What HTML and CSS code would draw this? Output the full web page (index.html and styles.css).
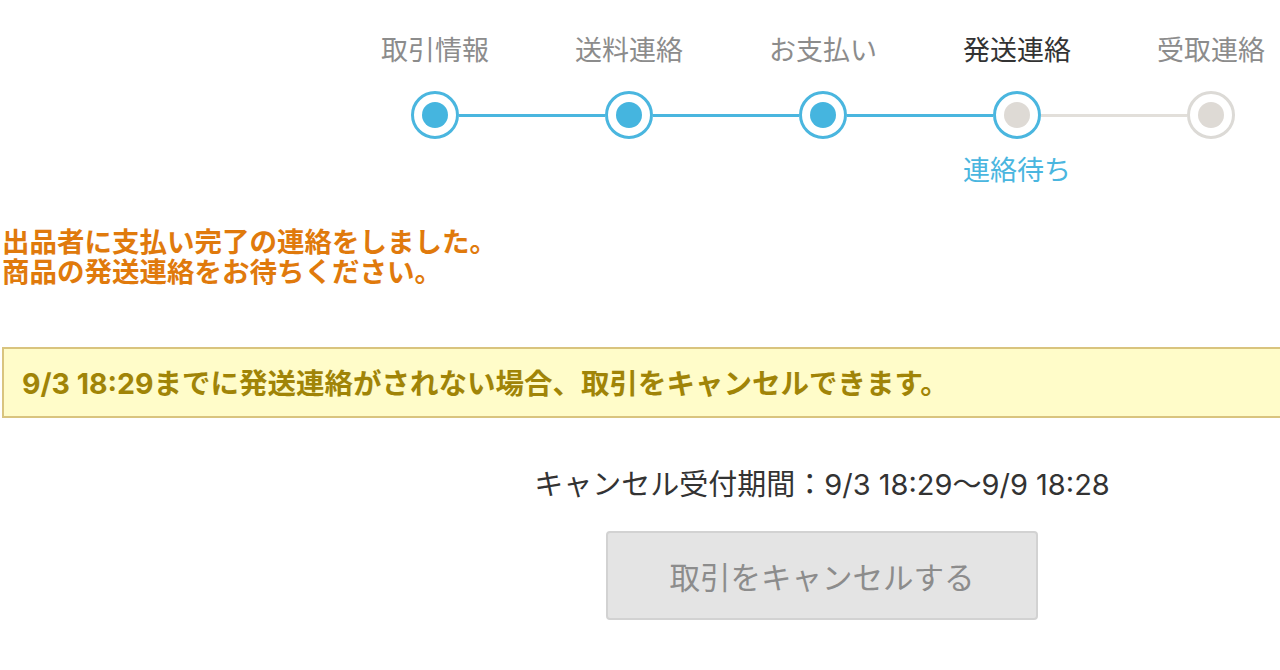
FILE: index.html
```html
<!DOCTYPE html>
<html lang="ja">
<head>
<meta charset="utf-8">
<title>取引画面</title>
<link rel="stylesheet" href="styles.css">
</head>
<body>
<div class="page">
  <section class="progress">
    <div class="step-labels">
      <div class="step-label">取引情報</div>
      <div class="step-label">送料連絡</div>
      <div class="step-label">お支払い</div>
      <div class="step-label current">発送連絡</div>
      <div class="step-label">受取連絡</div>
    </div>
    <div class="track">
      <span class="dot done"></span>
      <span class="line done"></span>
      <span class="dot done"></span>
      <span class="line done"></span>
      <span class="dot done"></span>
      <span class="line done"></span>
      <span class="dot current"></span>
      <span class="line"></span>
      <span class="dot"></span>
    </div>
    <div class="step-subs">
      <div class="step-sub"></div>
      <div class="step-sub"></div>
      <div class="step-sub"></div>
      <div class="step-sub active">連絡待ち</div>
      <div class="step-sub"></div>
    </div>
  </section>

  <div class="message">
    <p class="message-line">出品者に支払い完了の連絡をしました。</p>
    <p class="message-line">商品の発送連絡をお待ちください。</p>
  </div>

  <div class="notice">9/3 18:29までに発送連絡がされない場合、取引をキャンセルできます。</div>

  <div class="cancel">
    <p class="period">キャンセル受付期間：9/3 18:29～9/9 18:28</p>
    <button class="cancel-btn" type="button">取引をキャンセルする</button>
  </div>
</div>
</body>
</html>
```

FILE: styles.css
```css
html, body {
  margin: 0;
  padding: 0;
  background: #fff;
  overflow: hidden;
}
body {
  font-family: "Inter", "Noto Sans CJK JP", sans-serif;
  color: #333;
  width: 1280px;
  height: 670px;
}
.page {
  width: 1280px;
}
.progress {
  margin-left: 338px;
  width: 970px;
  padding-top: 35px;
}
.step-labels,
.step-subs {
  display: grid;
  grid-template-columns: repeat(5, 194px);
}
.step-label {
  text-align: center;
  font-size: 27px;
  line-height: 32px;
  color: #8c8c8c;
}
.step-label.current {
  color: #333;
}
.track {
  display: flex;
  align-items: center;
  margin-top: 24px;
  padding-left: 73px;
}
.dot {
  box-sizing: border-box;
  width: 48px;
  height: 48px;
  border-radius: 50%;
  border: 3px solid #dcdad6;
  background: #fff;
  display: flex;
  align-items: center;
  justify-content: center;
  flex: none;
}
.dot::after {
  content: "";
  width: 26px;
  height: 26px;
  border-radius: 50%;
  background: #dedad5;
}
.dot.done,
.dot.current {
  border-color: #4ab6df;
}
.dot.done::after {
  background: #45b5df;
}
.line {
  width: 146px;
  height: 3px;
  background: #e2dfda;
  flex: none;
}
.line.done {
  background: #4ab6df;
}
.step-subs {
  margin-top: 16px;
  height: 32px;
}
.step-sub {
  text-align: center;
  font-size: 27px;
  line-height: 32px;
  color: #4ab6df;
}
.message {
  margin: 40px 0 0 2px;
}
.message-line {
  margin: 0;
  height: 30px;
  font-size: 27.5px;
  line-height: 30px;
  font-weight: bold;
  color: #e07a0c;
  white-space: nowrap;
}
.notice {
  margin: 60px 0 0 2px;
  box-sizing: border-box;
  width: 1300px;
  height: 71px;
  display: flex;
  align-items: center;
  padding-left: 18px;
  padding-bottom: 3px;
  background: #fffcc9;
  border: 2px solid #d9c47e;
  font-size: 28.5px;
  font-weight: bold;
  color: #a08407;
  white-space: nowrap;
}
.cancel {
  width: 600px;
  margin-left: 522px;
  display: flex;
  flex-direction: column;
  align-items: center;
}
.period {
  margin: 51px 0 0;
  font-size: 29px;
  line-height: 32px;
  color: #333;
  white-space: nowrap;
}
.cancel-btn {
  margin-top: 30px;
  box-sizing: border-box;
  width: 432px;
  height: 89px;
  background: #e4e4e4;
  border: 2px solid #d2d2d2;
  border-radius: 4px;
  font-family: "Inter", "Noto Sans CJK JP", sans-serif;
  font-size: 30.5px;
  color: #8c8c8c;
}
```
